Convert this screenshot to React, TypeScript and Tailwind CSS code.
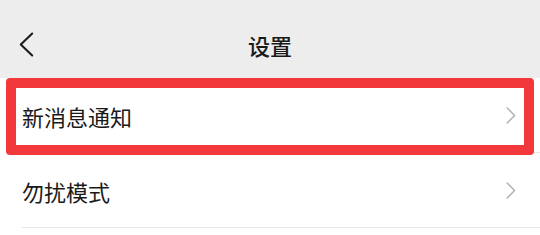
import React from "react";

const rows = [
  { id: "notify", label: "新消息通知", highlighted: true },
  { id: "dnd", label: "勿扰模式", highlighted: false },
];

function BackIcon() {
  return (
    <svg width="15" height="25" viewBox="0 0 15 25" fill="none">
      <path d="M13.2 1.5 L1.8 12.5 L13.2 23.5" stroke="#1c1c1c" strokeWidth="2.1" strokeLinecap="round" strokeLinejoin="round" />
    </svg>
  );
}

function ChevronRight() {
  return (
    <svg width="10" height="17" viewBox="0 0 10 17" fill="none">
      <path d="M1.2 1 L8.6 8.5 L1.2 16" stroke="#b3b3b3" strokeWidth="1.6" strokeLinecap="round" strokeLinejoin="round" />
    </svg>
  );
}

export default function App() {
  return (
    <div
      className="relative w-[540px] h-[235px] overflow-hidden bg-white"
      style={{ fontFamily: '"Noto Sans CJK SC", "Noto Sans", sans-serif' }}
    >
      {/* Nav bar */}
      <div className="h-[78px] bg-[#ededed] pt-[17px]">
        <div className="relative h-[56px] flex items-center justify-center">
          <div className="absolute left-[19px] top-[15px] flex">
            <BackIcon />
          </div>
          <span className="text-[22px] font-medium text-[#1a1a1a] leading-none">设置</span>
        </div>
      </div>

      {/* Settings list */}
      <div className="flex flex-col">
        {rows.map((row) => (
          <div key={row.id} className="pl-[22px]">
            <div className="h-[75px] flex items-center justify-between pr-[24px] border-b border-[#e6e6e6]">
              <span className="text-[22px] text-[#1a1a1a] leading-none pt-[2px]">{row.label}</span>
              <ChevronRight />
            </div>
          </div>
        ))}
      </div>

      {/* Highlight annotation */}
      <div className="absolute left-[6px] top-[78px] w-[528px] h-[77px] border-[10px] border-[#f2383b] rounded-[4px] pointer-events-none" />
    </div>
  );
}
